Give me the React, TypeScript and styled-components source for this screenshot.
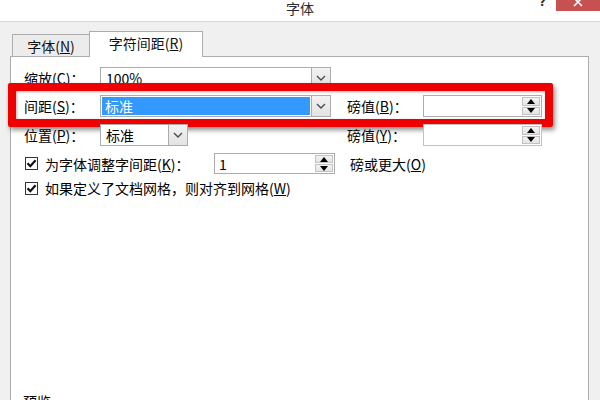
import styled, { createGlobalStyle } from "styled-components"

const GlobalStyle = createGlobalStyle`
	* {
		box-sizing: border-box;
	}

	body {
		margin: 0;
		overflow: hidden;
		background: #f0f0f0;
		font-family: "Noto Sans CJK SC", "Noto Sans", sans-serif;
		font-size: 14px;
		color: #000;
	}
`

const Key: React.FC<{ k: string }> = ({ k }) => (
	<>
		(<u>{k}</u>)
	</>
)

const Chevron = () => (
	<svg width="10" height="6" viewBox="0 0 10 6">
		<path d="M1 1 L5 5 L9 1" fill="none" stroke="#4d4d4d" strokeWidth="1.4" />
	</svg>
)

const Triangle: React.FC<{ down?: boolean }> = ({ down }) => (
	<svg width="8" height="5" viewBox="0 0 8 5">
		<path d={down ? "M0 0 H8 L4 5 Z" : "M0 5 H8 L4 0 Z"} fill="#000" />
	</svg>
)

const Combo: React.FC<{ width: number; value: string; selected?: boolean }> = ({
	width,
	value,
	selected,
}) => (
	<ComboBox $width={width}>
		<ComboText $selected={selected}>{value}</ComboText>
		<DropButton>
			<Chevron />
		</DropButton>
	</ComboBox>
)

const Spin: React.FC<{ width: number; value?: string; disabled?: boolean }> = ({
	width,
	value,
	disabled,
}) => (
	<SpinBox $width={width} $disabled={disabled}>
		<SpinText>{value}</SpinText>
		<SpinButtons>
			<SpinBtn>
				<Triangle />
			</SpinBtn>
			<SpinBtn>
				<Triangle down />
			</SpinBtn>
		</SpinButtons>
	</SpinBox>
)

const Check = () => (
	<CheckBox>
		<svg width="11" height="11" viewBox="0 0 11 11">
			<path d="M1.5 5.2 L4.3 8.2 L9.6 2.2" fill="none" stroke="#111" strokeWidth="2.2" />
		</svg>
	</CheckBox>
)

const App: React.FC = () => {
	return (
		<>
			<GlobalStyle />
			<Window>
				<TitleBar>
					<span />
					<Title>字体</Title>
					<Controls>
						<Help>
							<span>?</span>
						</Help>
						<CloseButton>
							<svg width="10" height="10" viewBox="0 0 10 10">
								<path d="M1 1 L9 9 M9 1 L1 9" stroke="#fff" strokeWidth="1.6" />
							</svg>
						</CloseButton>
					</Controls>
				</TitleBar>

				<Body>
					<TabStrip>
						<Tab>
							字体<Key k="N" />
						</Tab>
						<Tab $active>
							字符间距<Key k="R" />
						</Tab>
					</TabStrip>

					<Panel>
						<Form>
							<FormRow $height={21}>
								<Label>
									缩放<Key k="C" />：
								</Label>
								<Combo width={231} value="100%" />
							</FormRow>

							<FormRow $height={22}>
								<Label>
									间距<Key k="S" />：
								</Label>
								<Combo width={231} value="标准" selected />
								<Label>
									磅值<Key k="B" />：
								</Label>
								<Spin width={119} />
								<Highlight />
							</FormRow>

							<FormRow $height={22}>
								<Label>
									位置<Key k="P" />：
								</Label>
								<Combo width={88} value="标准" />
								<Label>
									磅值<Key k="Y" />：
								</Label>
								<Spin width={119} disabled />
							</FormRow>

							<CheckRow $height={21}>
								<Check />
								<CheckLabel $width={169}>
									为字体调整字间距<Key k="K" />：
								</CheckLabel>
								<Spin width={121} value="1" />
								<TrailText>
									磅或更大<Key k="O" />
								</TrailText>
							</CheckRow>

							<CheckRow $height={14}>
								<Check />
								<CheckLabel>
									如果定义了文档网格，则对齐到网格<Key k="W" />
								</CheckLabel>
							</CheckRow>
						</Form>

						<Group>
							<GroupTitle>预览</GroupTitle>
							<GroupLine />
						</Group>
					</Panel>
				</Body>
			</Window>
		</>
	)
}

export default App

const Window = styled.div`
	width: 600px;
	height: 400px;
	overflow: hidden;
	display: flex;
	flex-direction: column;
`

const TitleBar = styled.div`
	height: 22px;
	flex-shrink: 0;
	background: #fff;
	border-bottom: 1px solid #d6d6d6;
	display: grid;
	grid-template-columns: 1fr auto 1fr;
	align-items: start;
`

const Title = styled.div`
	line-height: 16px;
	color: #2b2b2b;
`

const Controls = styled.div`
	justify-self: end;
	display: flex;
	align-items: flex-start;
	gap: 10px;
`

const Help = styled.div`
	height: 8px;
	overflow: hidden;
	display: flex;
	align-items: flex-end;
	font-family: "DejaVu Sans", sans-serif;
	font-weight: bold;
	font-size: 12px;
	line-height: 12px;
	color: #333;
`

const CloseButton = styled.div`
	width: 44px;
	height: 11px;
	background: #c75050;
	overflow: hidden;
	display: flex;
	justify-content: center;
	align-items: flex-end;
	padding-bottom: 4px;
`

const Body = styled.div`
	flex: 1;
	display: flex;
	flex-direction: column;
	padding: 9px 11px 0 10px;
`

const TabStrip = styled.div`
	height: 25px;
	display: flex;
	align-items: flex-end;
	padding-left: 2px;
`

const Tab = styled.div<{ $active?: boolean }>`
	position: relative;
	z-index: ${({ $active }) => ($active ? 1 : 0)};
	width: ${({ $active }) => ($active ? "114px" : "77px")};
	height: ${({ $active }) => ($active ? "26px" : "22px")};
	margin-bottom: ${({ $active }) => ($active ? "-1px" : "0")};
	background: ${({ $active }) => ($active ? "#fff" : "#ececec")};
	border: 1px solid #acacac;
	border-bottom: none;
	border-right: ${({ $active }) => ($active ? "1px solid #acacac" : "none")};
	display: flex;
	align-items: center;
	justify-content: center;
	padding-bottom: ${({ $active }) => ($active ? "4px" : "0")};
	line-height: 16px;
	color: #111;
`

const Panel = styled.div`
	flex: 1;
	background: #fff;
	border: 1px solid #acacac;
	border-bottom: none;
	padding: 10px 12px 0 13px;
	display: flex;
	flex-direction: column;
`

const Form = styled.div`
	display: flex;
	flex-direction: column;
	align-items: flex-start;
	gap: 7px;
`

const FormRow = styled.div<{ $height: number }>`
	position: relative;
	height: ${({ $height }) => $height}px;
	display: grid;
	grid-template-columns: 76px 247px 76px 119px;
	align-items: stretch;
	justify-items: start;
`

const Label = styled.div`
	display: flex;
	align-items: center;
	line-height: 16px;
	white-space: nowrap;
`

// red annotation frame drawn over the spacing row
const Highlight = styled.div`
	position: absolute;
	top: -12px;
	right: -11px;
	bottom: -10px;
	left: -16px;
	border: 8px solid #ee0000;
	border-radius: 2px;
	box-shadow: 2px 3px 5px rgba(0, 0, 0, 0.45), inset 1px 1px 3px rgba(0, 0, 0, 0.3);
	pointer-events: none;
`

const ComboBox = styled.div<{ $width: number }>`
	width: ${({ $width }) => $width}px;
	display: flex;
	background: #fff;
	border: 1px solid #acacac;
	padding: 1px 0 1px 1px;
`

const ComboText = styled.div<{ $selected?: boolean }>`
	flex: 1;
	display: flex;
	align-items: center;
	padding-left: ${({ $selected }) => ($selected ? "3px" : "4px")};
	margin-right: 1px;
	line-height: 16px;
	background: ${({ $selected }) => ($selected ? "#3399ff" : "transparent")};
	color: ${({ $selected }) => ($selected ? "#fff" : "#000")};
`

const DropButton = styled.div`
	width: 19px;
	margin: -2px 0 -2px 0;
	background: linear-gradient(#f2f2f2, #e3e3e3);
	border: 1px solid #acacac;
	border-right: none;
	display: flex;
	align-items: center;
	justify-content: center;
`

const SpinBox = styled.div<{ $width: number; $disabled?: boolean }>`
	width: ${({ $width }) => $width}px;
	display: flex;
	background: #fff;
	border: 1px solid ${({ $disabled }) => ($disabled ? "#c2c2c2" : "#acacac")};
	padding: 1px;
`

const SpinText = styled.div`
	flex: 1;
	display: flex;
	align-items: center;
	padding-left: 3px;
	line-height: 16px;
`

const SpinButtons = styled.div`
	width: 18px;
	display: flex;
	flex-direction: column;
	gap: 1px;
`

const SpinBtn = styled.div`
	flex: 1;
	background: linear-gradient(#f3f3f3, #e4e4e4);
	border: 1px solid #c2c2c2;
	display: flex;
	align-items: center;
	justify-content: center;
`

const CheckRow = styled.div<{ $height: number }>`
	height: ${({ $height }) => $height}px;
	display: flex;
	align-items: stretch;
	padding-left: 1px;
`

const CheckBox = styled.div`
	width: 13px;
	height: 13px;
	align-self: center;
	border: 1px solid #333;
	background: #fff;
	display: flex;
	align-items: center;
	justify-content: center;
	margin-right: 7px;
`

const CheckLabel = styled.div<{ $width?: number }>`
	width: ${({ $width }) => ($width ? `${$width}px` : "auto")};
	display: flex;
	align-items: center;
	line-height: 16px;
	white-space: nowrap;
`

const TrailText = styled.div`
	display: flex;
	align-items: center;
	margin-left: 15px;
	line-height: 16px;
`

const Group = styled.div`
	margin-top: 198px;
	display: flex;
	align-items: center;
	gap: 5px;
	margin-left: -1px;
`

const GroupTitle = styled.div`
	line-height: 16px;
`

const GroupLine = styled.div`
	flex: 1;
	border-top: 1px solid #d5d5d5;
	border-bottom: 1px solid #fff;
`
